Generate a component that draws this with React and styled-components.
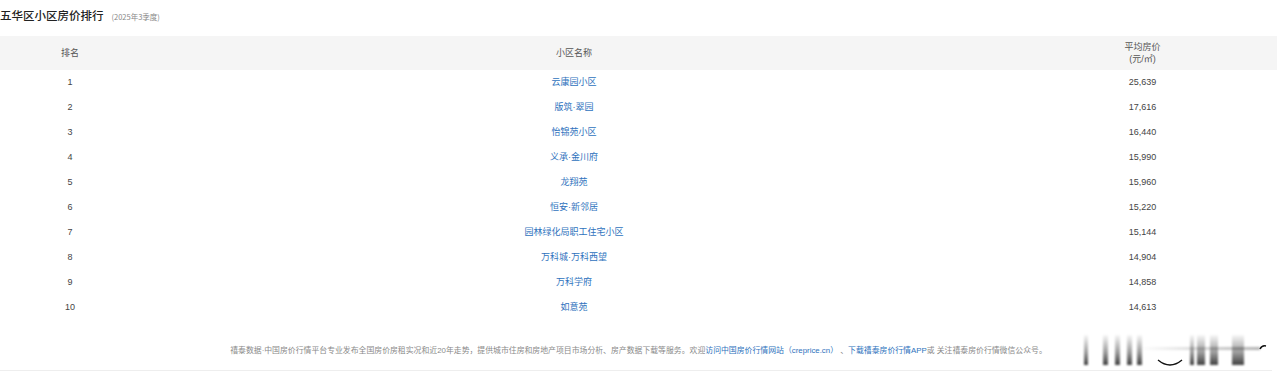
import React from "react";
import styled, { createGlobalStyle } from "styled-components";

const rows = [
  { rank: 1, name: "云康园小区", price: "25,639" },
  { rank: 2, name: "版筑·翠园", price: "17,616" },
  { rank: 3, name: "怡锦苑小区", price: "16,440" },
  { rank: 4, name: "义承·金川府", price: "15,990" },
  { rank: 5, name: "龙翔苑", price: "15,960" },
  { rank: 6, name: "恒安·新邻居", price: "15,220" },
  { rank: 7, name: "园林绿化局职工住宅小区", price: "15,144" },
  { rank: 8, name: "万科城·万科西望", price: "14,904" },
  { rank: 9, name: "万科学府", price: "14,858" },
  { rank: 10, name: "如意苑", price: "14,613" },
];

const GlobalStyle = createGlobalStyle`
  html, body {
    margin: 0;
    padding: 0;
    background: #fff;
  }
  body {
    font-family: "Liberation Sans", "Noto Sans CJK SC", sans-serif;
    color: #333;
  }
`;

export default function App() {
  return (
    <>
      <GlobalStyle />
      <Page>
        <TitleBar>
          <Title>五华区小区房价排行</Title>
          <Period>(2025年3季度)</Period>
        </TitleBar>
        <Table>
          <colgroup>
            <col style={{ width: 140 }} />
            <col />
            <col style={{ width: 269 }} />
          </colgroup>
          <thead>
            <tr>
              <Th>排名</Th>
              <Th>小区名称</Th>
              <Th>
                平均房价
                <br />
                (元/㎡)
              </Th>
            </tr>
          </thead>
          <tbody>
            {rows.map((r) => (
              <tr key={r.rank}>
                <Td>{r.rank}</Td>
                <Td>
                  <NameLink>{r.name}</NameLink>
                </Td>
                <Td>{r.price}</Td>
              </tr>
            ))}
          </tbody>
        </Table>
        <Note>
          禧泰数据·中国房价行情平台专业发布全国房价房租实况和近20年走势，提供城市住房和房地产项目市场分析、房产数据下载等服务。欢迎
          <NoteLink>访问中国房价行情网站（creprice.cn）</NoteLink> 、 
          <NoteLink>下载禧泰房价行情APP</NoteLink>或 关注禧泰房价行情微信公众号。
        </Note>
        <Divider />
        <Watermark width="190" height="40" viewBox="0 0 190 40">
          <defs>
            <linearGradient id="wm" x1="0" y1="0" x2="0" y2="1">
              <stop offset="0" stopColor="#000" stopOpacity="0.03" />
              <stop offset="0.6" stopColor="#000" stopOpacity="0.4" />
              <stop offset="1" stopColor="#000" stopOpacity="0.75" />
            </linearGradient>
            <linearGradient id="wmLine" x1="0" y1="0" x2="1" y2="0">
              <stop offset="0" stopColor="#000" stopOpacity="0" />
              <stop offset="1" stopColor="#000" stopOpacity="0.3" />
            </linearGradient>
            <filter id="soft" x="-10%" y="-20%" width="120%" height="140%">
              <feGaussianBlur stdDeviation="0.9" />
            </filter>
          </defs>
          <g filter="url(#soft)">
            <rect x="60" y="17" width="120" height="3" fill="url(#wmLine)" />
            <rect x="4" y="5" width="4" height="30" fill="url(#wm)" />
            <rect x="23" y="5" width="5" height="30" fill="url(#wm)" />
            <rect x="35" y="5" width="5" height="30" fill="url(#wm)" />
            <rect x="47" y="5" width="5" height="30" fill="url(#wm)" />
            <rect x="57" y="5" width="5" height="30" fill="url(#wm)" />
            <rect x="110" y="5" width="4" height="30" fill="url(#wm)" />
            <rect x="117" y="5" width="8" height="30" fill="url(#wm)" />
            <rect x="130" y="5" width="8" height="30" fill="url(#wm)" />
            <rect x="152" y="5" width="12" height="30" fill="url(#wm)" />
          </g>
          <path d="M78 30 Q90 40 102 30" stroke="#111" strokeWidth="1.3" fill="none" />
          <path d="M180 19 Q182 15 186 16" stroke="#111" strokeWidth="1.5" fill="none" />
        </Watermark>
      </Page>
    </>
  );
}

const Page = styled.div`
  position: relative;
  width: 1277px;
  height: 380px;
  overflow: hidden;
`;

const TitleBar = styled.div`
  display: flex;
  align-items: baseline;
  gap: 8px;
  padding-top: 7px;
  height: 28px;
  box-sizing: border-box;
`;

const Title = styled.h3`
  margin: 0;
  font-family: "Noto Sans CJK SC", sans-serif;
  font-size: 11.5px;
  font-weight: 500;
  color: #222;
`;

const Period = styled.span`
  font-family: "Noto Sans CJK SC", sans-serif;
  font-size: 7.5px;
  color: #888;
`;

const Table = styled.table`
  width: 100%;
  margin-top: 8px;
  border-collapse: collapse;
  table-layout: fixed;
`;

const Th = styled.th`
  height: 34px;
  padding: 0;
  background: #f5f5f5;
  font-family: "Liberation Sans", "Noto Sans CJK SC", sans-serif;
  font-size: 9px;
  font-weight: normal;
  line-height: 12px;
  color: #555;
  text-align: center;
`;

const Td = styled.td`
  height: 23px;
  padding: 0 0 2px;
  font-family: "Liberation Sans", "Noto Sans CJK SC", sans-serif;
  font-size: 9px;
  line-height: 12px;
  color: #444;
  text-align: center;
`;

const NameLink = styled.a`
  font-family: "Liberation Sans", "Noto Sans CJK SC", sans-serif;
  color: #2e72bd;
  text-decoration: none;
  cursor: pointer;
`;

const Note = styled.p`
  margin: 25px 0 0;
  font-family: "Liberation Sans", "Noto Sans CJK SC", sans-serif;
  font-size: 7.87px;
  line-height: 12px;
  color: #8a8a8a;
  text-align: center;
`;

const NoteLink = styled.a`
  color: #2e72bd;
  text-decoration: none;
  cursor: pointer;
`;

const Divider = styled.div`
  margin: 13px 5px 0 0;
  border-top: 1px solid #eee;
`;

const Watermark = styled.svg`
  position: absolute;
  left: 1080px;
  top: 330px;
`;
